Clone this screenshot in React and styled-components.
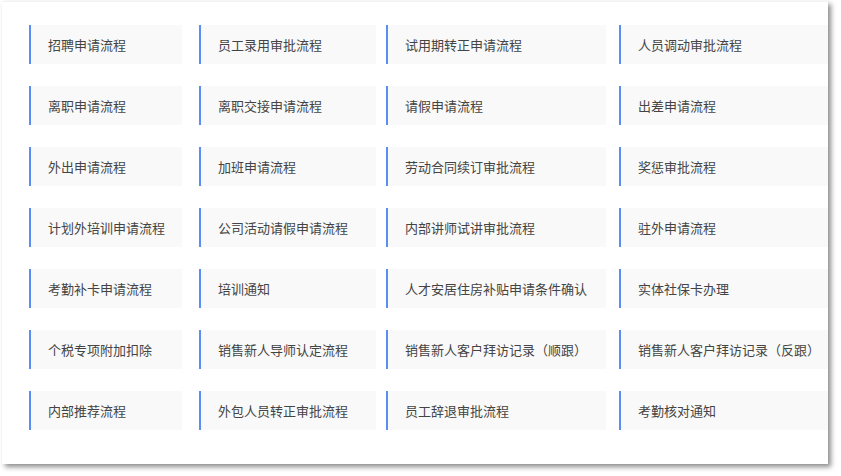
import React from 'react';
import styled, { createGlobalStyle } from 'styled-components';

const GlobalStyle = createGlobalStyle`
  html, body {
    margin: 0;
    padding: 0;
    background: #ffffff;
  }
  body {
    font-family: "Noto Sans CJK SC", "Liberation Sans", sans-serif;
  }
`;

const rows = [
  ['招聘申请流程', '员工录用审批流程', '试用期转正申请流程', '人员调动审批流程'],
  ['离职申请流程', '离职交接申请流程', '请假申请流程', '出差申请流程'],
  ['外出申请流程', '加班申请流程', '劳动合同续订审批流程', '奖惩审批流程'],
  ['计划外培训申请流程', '公司活动请假申请流程', '内部讲师试讲审批流程', '驻外申请流程'],
  ['考勤补卡申请流程', '培训通知', '人才安居住房补贴申请条件确认', '实体社保卡办理'],
  ['个税专项附加扣除', '销售新人导师认定流程', '销售新人客户拜访记录（顺跟）', '销售新人客户拜访记录（反跟）'],
  ['内部推荐流程', '外包人员转正审批流程', '员工辞退审批流程', '考勤核对通知'],
];

// width of each column's cells, the last one runs past the card edge
const cellWidths = ['153px', '177px', '220px', '230px'];

export default function App() {
  return (
    <>
      <GlobalStyle />
      <Page>
        <Card>
          <Grid>
            {rows.flat().map((label, i) => (
              <Cell key={i} $w={cellWidths[i % 4]}>
                {label}
              </Cell>
            ))}
          </Grid>
        </Card>
      </Page>
    </>
  );
}

const Page = styled.div`
  padding: 1px 0 0 2px;
  width: 841px;
  height: 476px;
  box-sizing: border-box;
`;

const Card = styled.div`
  width: 826px;
  height: 463px;
  box-sizing: border-box;
  background: #ffffff;
  overflow: hidden;
  border-top: 1px solid #f2f2f2;
  box-shadow: 3px 3px 5px rgba(0, 0, 0, 0.45);
  padding: 23px 0 0 27px;
`;

const Grid = styled.div`
  display: grid;
  grid-template-columns: 170px 187px 233px 240px;
  grid-auto-rows: 39px;
  row-gap: 22px;
`;

const Cell = styled.div`
  width: ${({ $w }) => $w};
  height: 39px;
  box-sizing: border-box;
  display: flex;
  align-items: center;
  padding-left: 17px;
  background: #f9f9f9;
  border-left: 2px solid #5b8ef5;
  color: #444444;
  font-size: 13px;
  white-space: nowrap;
`;
